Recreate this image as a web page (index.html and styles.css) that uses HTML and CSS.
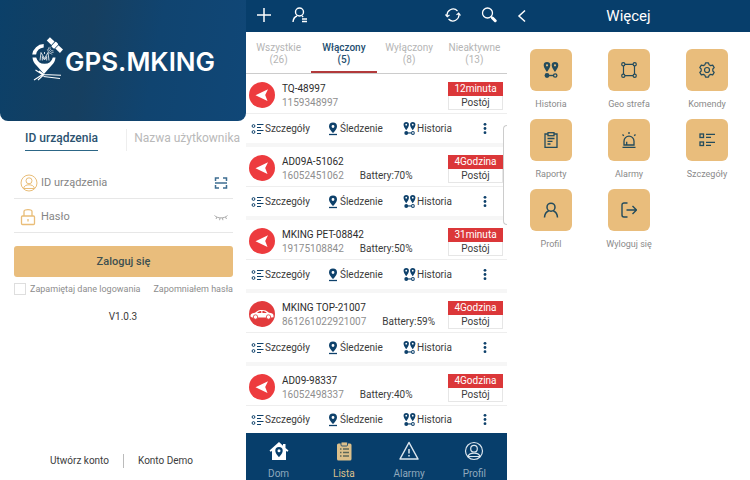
FILE: index.html
```html
<!DOCTYPE html>
<html lang="pl">
<head>
<meta charset="utf-8">
<meta name="viewport" content="width=device-width, initial-scale=1">
<title>GPS.MKING</title>
<link rel="stylesheet" href="styles.css">
</head>
<body>
<svg class="sprite" aria-hidden="true">
  <symbol id="i-arrow" viewBox="0 0 26 26"><circle cx="13" cy="13" r="13" fill="#ed3b3e"/><path d="M6.500 13.300 19 7.300 16.200 13l2.300 6z" fill="#fff"/></symbol>
  <symbol id="i-car" viewBox="0 0 26 26"><circle cx="13" cy="13" r="13" fill="#e23a3c"/><path d="M1.500 15.500c0-2.500 1-3 4.500-3.700C8.500 9.500 10 9 13 9s4.500.6 7 2.800c2.500.2 4.500.7 4.500 2.700v1.800l-2 .3H3z" fill="#fff"/><path d="M8 12c1.500-1.500 2.500-1.900 4.300-1.900V12zM13.400 10.100c1.900 0 3 .5 4.400 1.900h-4.400z" fill="#e23a3c"/><circle cx="6.500" cy="16" r="2.200" fill="#fff" stroke="#e23a3c" stroke-width=".8"/><circle cx="19.500" cy="16" r="2.200" fill="#fff" stroke="#e23a3c" stroke-width=".8"/></symbol>
  <symbol id="i-list" viewBox="0 0 14 12" fill="none" stroke="currentColor"><circle cx="2.500" cy="3" r="1.400"/><circle cx="2.500" cy="9" r="1.400"/><path d="M6 1.500h6.500M6 4.500h4M6 7.500h6.500M6 10.500h4"/></symbol>
  <symbol id="i-pin" viewBox="0 0 12 14"><path fill="currentColor" fill-rule="evenodd" d="M6 .5a4 4 0 0 0-4 4C2 7.300 6 11 6 11s4-3.700 4-6.500a4 4 0 0 0-4-4zm0 2.600a1.400 1.400 0 1 1 0 2.800 1.400 1.400 0 0 1 0-2.800z"/><path d="M2 12.500h8" stroke="currentColor" stroke-width="1.300"/></symbol>
  <symbol id="i-route" viewBox="0 0 16 16"><path fill="currentColor" fill-rule="evenodd" d="M4 0A3.300 3.300 0 0 0 .7 3.300C.7 6 4 10 4 10s3.300-4 3.300-6.700A3.300 3.300 0 0 0 4 0zm0 2.200a1.100 1.100 0 1 1 0 2.200 1.100 1.100 0 0 1 0-2.200zM12 0a3.300 3.300 0 0 0-3.300 3.300C8.700 6 12 10 12 10s3.300-4 3.300-6.700A3.300 3.300 0 0 0 12 0zm0 2.200a1.100 1.100 0 1 1 0 2.200 1.100 1.100 0 0 1 0-2.200z"/><path d="M4 13.500h6.500" stroke="currentColor" stroke-width="1.400"/><circle cx="4" cy="13.500" r="2.400" fill="currentColor"/><circle cx="12.200" cy="13.500" r="1.700" fill="none" stroke="currentColor" stroke-width="1.300"/></symbol>
  <symbol id="i-dots" viewBox="0 0 4 14" fill="currentColor"><circle cx="2" cy="2.500" r="1.500"/><circle cx="2" cy="7" r="1.500"/><circle cx="2" cy="11.500" r="1.500"/></symbol>
</svg>

<main class="screens">
  <section class="login">
    <header class="hero">
      <svg class="logo" viewBox="0 0 32 44" aria-hidden="true">
        <path d="M13 37 5.500 28.500A12 12 0 0 1 1.500 20.500h3.700a8.600 8.600 0 0 0 16.600 0h2.700a12 12 0 0 1-4 8z" fill="#fff"/>
        <path d="M1.200 17.500A12 12 0 0 1 12.700 7v3.600a8.600 8.600 0 0 0-7.600 6.900z" fill="#fff"/>
        <path d="M9 23.500 10 15.500l3.500 6 3.500-6 1 8M11.300 23.500v-4l2.200 3.500 2.200-3.500v4M13.500 15v2" fill="none" stroke="#fff" stroke-width=".8"/>
        <g transform="rotate(43 24 8)" fill="#fff"><rect x="15" y="5.800" width="6.300" height="4.600"/><rect x="22" y="5" width="4" height="6.500" rx="1"/><rect x="26.700" y="5.800" width="6.300" height="4.600"/></g>
        <path d="M17.500 10.500a4.500 4.500 0 0 0 5 5M16.300 12.300a6 6 0 0 0 5 5M19 9.800c-.5 2.500 1 4 3.500 4.200" fill="none" stroke="#fff" stroke-width=".6"/>
        <path d="m4.500 33 7 4.500L3 43M8 34l5 3.500L7 43m5-5.500 18 .8M12.500 39.500l16.500 2" fill="none" stroke="#fff" stroke-width="1.100"/>
      </svg>
      <h1 class="brand">GPS.MKING</h1>
    </header>
    <nav class="login-tabs">
      <a class="login-tab active" href="#id">ID urządzenia</a>
      <a class="login-tab" href="#name">Nazwa użytkownika</a>
    </nav>
    <form class="login-form">
      <label class="field">
        <svg class="field-icon" viewBox="0 0 18 18" fill="none" stroke="#e9bd78" aria-hidden="true"><circle cx="9" cy="9" r="8"/><circle cx="9" cy="6.800" r="3"/><path d="M3.500 14.500c.5-5 10.500-5 11 0z"/></svg>
        <input type="text" placeholder="ID urządzenia" aria-label="ID urządzenia">
        <svg class="field-action" viewBox="0 0 14 12" fill="none" stroke="#3e6d91" stroke-width="1.500" aria-hidden="true"><path d="M1.500 4V1h3.500M9 1h3.500v3M1.500 8v3h3.500M9 11h3.500V8M1 6h12"/></svg>
      </label>
      <label class="field">
        <svg class="field-icon" viewBox="0 0 18 18" fill="none" stroke="#e9bd78" stroke-width="1.300" aria-hidden="true"><rect x="1.500" y="8" width="13" height="8.500" rx="1"/><path d="M4 8V3.500C4 1 12 1 12 3.500V8M8 11v2.500"/></svg>
        <input type="password" placeholder="Hasło" aria-label="Hasło">
        <svg class="field-action" viewBox="0 0 14 12" fill="none" stroke="#aaa" aria-hidden="true"><path d="M.5 4.500c3 3.200 10 3.200 13 0M3 6 2 8m4-1-.4 2.200M8.500 7l.4 2.200M11.500 6l1 2"/></svg>
      </label>
      <button class="submit" type="submit">Zaloguj się</button>
      <div class="options">
        <label class="remember"><input type="checkbox">Zapamiętaj dane logowania</label>
        <a href="#forgot">Zapomniałem hasła</a>
      </div>
    </form>
    <p class="version">V1.0.3</p>
    <footer class="login-footer">
      <a href="#register">Utwórz konto</a>
      <a href="#demo">Konto Demo</a>
    </footer>
  </section>

  <section class="devices">
    <header class="bar">
      <button class="icon-button" aria-label="Dodaj"><svg class="icon-16" viewBox="0 0 16 16" fill="none" stroke="#fff" stroke-width="1.500"><path d="M8 1v14M1 8h14"/></svg></button>
      <button class="icon-button" aria-label="Konta"><svg class="icon-16" viewBox="0 0 16 16" fill="none" stroke="#fff" stroke-width="1.400"><circle cx="7.500" cy="5" r="4"/><path d="M1 15c.3-3.500 2-5.300 4-6M10 9l1.200 1M10 12h5M10 14.500h5"/></svg></button>
      <span class="spacer"></span>
      <button class="icon-button" aria-label="Odśwież"><svg class="icon-16" viewBox="0 0 16 16" fill="none" stroke="#fff" stroke-width="1.200"><path d="M2.300 9.500A6 6 0 0 1 12.500 4M13.700 6.500A6 6 0 0 1 3.500 12M.5 7.500l1.800 2.200 2.200-1.600M11.500 7.900l2.200-1.700 1.800 2.300"/></svg></button>
      <button class="icon-button" aria-label="Szukaj"><svg class="icon-16" viewBox="0 0 16 16" fill="none" stroke="#fff"><circle cx="6.500" cy="6" r="5" stroke-width="1.300"/><path d="m10 9.500 1.500 1.500" stroke-width="1.300"/><path d="m11.500 11 2.700 2.700" stroke-width="3" stroke-linecap="round"/></svg></button>
    </header>
    <nav class="filters">
      <a href="#all">Wszystkie<br>(26)</a>
      <a class="active" href="#on">Włączony<br>(5)</a>
      <a href="#off">Wyłączony<br>(8)</a>
      <a href="#inactive">Nieaktywne<br>(13)</a>
    </nav>
    <div class="device-list">
      <article class="device">
        <div class="device-head">
          <svg class="avatar" aria-hidden="true"><use href="#i-arrow"/></svg>
          <div class="device-info"><h2>TQ-48997</h2><p><span class="imei">1159348997</span></p></div>
          <div class="status"><strong>12minuta</strong><span>Postój</span></div>
        </div>
        <div class="actions">
          <a href="#d"><svg class="list-icon"><use href="#i-list"/></svg>Szczegóły</a>
          <a href="#t"><svg class="pin-icon"><use href="#i-pin"/></svg>Śledzenie</a>
          <a href="#h"><svg class="route-icon"><use href="#i-route"/></svg>Historia</a>
          <button class="more-button" aria-label="Więcej opcji"><svg><use href="#i-dots"/></svg></button>
        </div>
      </article>
      <article class="device">
        <div class="device-head">
          <svg class="avatar" aria-hidden="true"><use href="#i-arrow"/></svg>
          <div class="device-info"><h2>AD09A-51062</h2><p><span class="imei">16052451062</span><span>Battery:70%</span></p></div>
          <div class="status"><strong>4Godzina</strong><span>Postój</span></div>
        </div>
        <div class="actions">
          <a href="#d"><svg class="list-icon"><use href="#i-list"/></svg>Szczegóły</a>
          <a href="#t"><svg class="pin-icon"><use href="#i-pin"/></svg>Śledzenie</a>
          <a href="#h"><svg class="route-icon"><use href="#i-route"/></svg>Historia</a>
          <button class="more-button" aria-label="Więcej opcji"><svg><use href="#i-dots"/></svg></button>
        </div>
      </article>
      <article class="device">
        <div class="device-head">
          <svg class="avatar" aria-hidden="true"><use href="#i-arrow"/></svg>
          <div class="device-info"><h2>MKING PET-08842</h2><p><span class="imei">19175108842</span><span>Battery:50%</span></p></div>
          <div class="status"><strong>31minuta</strong><span>Postój</span></div>
        </div>
        <div class="actions">
          <a href="#d"><svg class="list-icon"><use href="#i-list"/></svg>Szczegóły</a>
          <a href="#t"><svg class="pin-icon"><use href="#i-pin"/></svg>Śledzenie</a>
          <a href="#h"><svg class="route-icon"><use href="#i-route"/></svg>Historia</a>
          <button class="more-button" aria-label="Więcej opcji"><svg><use href="#i-dots"/></svg></button>
        </div>
      </article>
      <article class="device">
        <div class="device-head">
          <svg class="avatar" aria-hidden="true"><use href="#i-car"/></svg>
          <div class="device-info"><h2>MKING TOP-21007</h2><p><span class="imei">861261022921007</span><span>Battery:59%</span></p></div>
          <div class="status"><strong>4Godzina</strong><span>Postój</span></div>
        </div>
        <div class="actions">
          <a href="#d"><svg class="list-icon"><use href="#i-list"/></svg>Szczegóły</a>
          <a href="#t"><svg class="pin-icon"><use href="#i-pin"/></svg>Śledzenie</a>
          <a href="#h"><svg class="route-icon"><use href="#i-route"/></svg>Historia</a>
          <button class="more-button" aria-label="Więcej opcji"><svg><use href="#i-dots"/></svg></button>
        </div>
      </article>
      <article class="device">
        <div class="device-head">
          <svg class="avatar" aria-hidden="true"><use href="#i-arrow"/></svg>
          <div class="device-info"><h2>AD09-98337</h2><p><span class="imei">16052498337</span><span>Battery:40%</span></p></div>
          <div class="status"><strong>4Godzina</strong><span>Postój</span></div>
        </div>
        <div class="actions">
          <a href="#d"><svg class="list-icon"><use href="#i-list"/></svg>Szczegóły</a>
          <a href="#t"><svg class="pin-icon"><use href="#i-pin"/></svg>Śledzenie</a>
          <a href="#h"><svg class="route-icon"><use href="#i-route"/></svg>Historia</a>
          <button class="more-button" aria-label="Więcej opcji"><svg><use href="#i-dots"/></svg></button>
        </div>
      </article>
    </div>
    <nav class="bottom-nav">
      <a href="#home"><svg viewBox="0 0 20 20"><path fill="#fff" fill-rule="evenodd" d="M10 1 .5 9.500l1 1.200L3 10v9h14v-9l1.500.7 1-1.200L16.500 7V3H14v1.700zM10 6a3.700 3.700 0 0 0-3.700 3.700C6.300 12.500 10 16 10 16s3.700-3.500 3.700-6.300A3.700 3.700 0 0 0 10 6zm0 2.200a1.500 1.500 0 1 1 0 3 1.500 1.500 0 0 1 0-3z"/></svg>Dom</a>
      <a class="active" href="#list"><svg viewBox="0 0 20 20"><rect x="3" y="2.500" width="14.500" height="17" rx="1.500" fill="#dcc08b"/><rect x="7" y="1" width="6.500" height="4" rx="1" fill="#dcc08b" stroke="#073e6b" stroke-width=".8"/><path d="M6 8h1.500M9 8h6M6 11.500h1.500M9 11.500h6M6 15h1.500M9 15h6" stroke="#5d6758" stroke-width="1.300"/></svg>Lista</a>
      <a href="#alarms"><svg viewBox="0 0 20 20" fill="none" stroke="#dce6ee" stroke-width="1.500" stroke-linejoin="round"><path d="M10 1.500 19 18H1zM10 8v4.500M10 14v1.500"/></svg>Alarmy</a>
      <a href="#profile"><svg viewBox="0 0 20 20" fill="none" stroke="#dce6ee" stroke-width="1.200"><circle cx="10" cy="10" r="8.500"/><circle cx="10" cy="7.700" r="3.300"/><path d="M4 15.500c1-4.500 11-4.500 12 0z"/></svg>Profil</a>
    </nav>
    <span class="edge-handle"></span>
  </section>

  <section class="more">
    <header class="bar more-bar">
      <button class="icon-button" aria-label="Wstecz"><svg class="icon-16" viewBox="0 0 16 16" fill="none" stroke="#fff" stroke-width="1.500"><path d="M10 2.500 4 8l6 5.500"/></svg></button>
      <h2>Więcej</h2>
      <span></span>
    </header>
    <nav class="tiles">
      <a href="#h"><span class="tile"><svg><use href="#i-route"/></svg></span>Historia</a>
      <a href="#g"><span class="tile"><svg viewBox="0 0 16 16" fill="none" stroke="currentColor" stroke-width="1.200"><path d="M4 2.300h8M4 13.700h8M2.500 4v8M13.500 4v8"/><circle cx="2.300" cy="2.300" r="1.600"/><circle cx="13.700" cy="2.300" r="1.600"/><circle cx="2.300" cy="13.700" r="1.600"/><circle cx="13.700" cy="13.700" r="1.600"/></svg></span>Geo strefa</a>
      <a href="#k"><span class="tile"><svg viewBox="0 0 16 16" fill="none" stroke="currentColor" stroke-width="1.200" stroke-linejoin="round"><path d="M6.500.8h3l.6 2 1.500.8 2.100-.5 1.500 2.500L13.800 7v2l1.400 1.400-1.500 2.500-2.100-.5-1.500.8-.6 2h-3l-.6-2-1.500-.8-2.100.5-1.500-2.500L2.200 9V7L.8 5.600l1.500-2.500 2.100.5 1.500-.8z"/><circle cx="8" cy="8" r="2.500"/></svg></span>Komendy</a>
      <a href="#r"><span class="tile"><svg viewBox="0 0 16 16" fill="none" stroke="currentColor" stroke-width="1.300"><path d="M5 2H2v13.300h12V2h-3"/><rect x="5" y=".7" width="6" height="3"/><path d="M4.500 6.500h7M4.500 9.300h5M4.500 12h3"/></svg></span>Raporty</a>
      <a href="#a"><span class="tile"><svg viewBox="0 0 16 16" fill="none" stroke="currentColor" stroke-width="1.300"><path d="M3 13V9.200a5 5 0 0 1 10 0V13zM1.500 15.300h13M5.700 12.500V9.800M8 0v2M1.500 2.500l1.300 1.300M14.500 2.500l-1.300 1.300"/></svg></span>Alarmy</a>
      <a href="#s"><span class="tile"><svg viewBox="0 0 16 16" fill="none" stroke="currentColor" stroke-width="1.300"><rect x="1" y="2" width="3.500" height="3.500"/><rect x="1" y="10" width="3.500" height="3.500"/><path d="M7 2.300h9M7 5.300h5M7 10.300h9M7 13.300h5"/></svg></span>Szczegóły</a>
      <a href="#p"><span class="tile"><svg viewBox="0 0 16 16" fill="none" stroke="currentColor" stroke-width="1.500"><circle cx="8" cy="5.200" r="4"/><path d="M1.500 15.500c.2-3.800 1.800-5.700 4.200-6.800M14.500 15.500c-.2-3.800-1.800-5.700-4.200-6.800"/></svg></span>Profil</a>
      <a href="#w"><span class="tile"><svg viewBox="0 0 16 16" fill="none" stroke="currentColor" stroke-width="1.400"><path d="M6.500 1H3a2 2 0 0 0-2 2v10a2 2 0 0 0 2 2h3.500M5.500 8h10M11.500 4l4 4-4 4"/></svg></span>Wyloguj się</a>
    </nav>
  </section>
</main>
</body>
</html>
```
FILE: styles.css
```css
* { box-sizing: border-box; }
body {
  margin: 0;
  font-family: Roboto, "Liberation Sans", sans-serif;
  font-size: 10px;
  color: #3c3c3c;
  background: #fff;
}
h1, h2, p { margin: 0; font-weight: 400; }
a { color: inherit; text-decoration: none; }
button, input { font: inherit; color: inherit; border: 0; padding: 0; background: none; }
svg { display: block; flex: none; }
.sprite { position: absolute; width: 0; height: 0; }

.screens {
  display: grid;
  grid-template-columns: 246fr 261fr 243fr;
  min-height: 100vh;
}
.screens > section { min-width: 0; }

/* Login */
.login { display: flex; flex-direction: column; }
.hero {
  display: flex;
  align-items: center;
  justify-content: center;
  gap: 2px;
  padding: 37px 0 40px;
  border-radius: 0 0 8px 8px;
  background: linear-gradient(100deg, #0b4069 0%, #163f60 36%, #104470 62%, #104777 100%);
}
.logo { width: 32px; height: 44px; }
.brand { padding-top: 6px; font: 600 26px/32px Inter, sans-serif; color: #fff; }
.login-tabs { display: flex; justify-content: space-between; padding: 8px 6px 0 25px; font-size: 12px; line-height: 18px; }
.login-tab { color: #b9b9b9; }
.login-tab + .login-tab { padding-left: 7px; border-left: 1px solid #eee; }
.login-tab.active { padding-bottom: 3px; border-bottom: 1px solid #2c6686; color: #2c5370; font-weight: 500; }
.login-form { padding: 14px 13px 0 14px; }
.field {
  display: flex;
  align-items: center;
  gap: 3px;
  height: 34px;
  padding: 2px 5px 0 6px;
  border-bottom: 1px solid #e7e7e7;
}
.field-icon { width: 18px; height: 18px; }
.field-action { width: 14px; height: 12px; }
.field input { flex: 1; min-width: 0; outline: 0; font-size: 11px; }
.field input::placeholder { color: #858585; opacity: 1; }
.submit {
  width: 100%;
  height: 31px;
  margin-top: 13px;
  border-radius: 3px;
  background: #e9bd7c;
  color: #3d5050;
  font-size: 11px;
  font-weight: 500;
}
.options { display: flex; justify-content: space-between; align-items: center; margin-top: 6px; font-size: 9px; color: #8d8d8d; }
.remember { display: flex; align-items: center; gap: 4px; }
.remember input { appearance: none; width: 12px; height: 12px; margin: 0; border: 1px solid #dedede; }
.version { margin-top: 16px; line-height: 12px; text-align: center; }
.login-footer { display: grid; grid-template-columns: 1fr 1fr; margin-top: auto; padding-bottom: 12px; line-height: 14px; }
.login-footer a { padding: 0 14px; text-align: right; }
.login-footer a + a { border-left: 1px solid #bbb; text-align: left; }

/* Shared top bar */
.bar { display: flex; align-items: center; height: 32px; padding: 0 10px; background: #073e6b; color: #fff; }
.icon-button { display: block; }
.icon-16 { width: 16px; height: 16px; }

/* Device list */
.devices { position: relative; display: flex; flex-direction: column; }
.devices .bar { gap: 20px; padding-bottom: 3px; }
.spacer { flex: 1; }
.filters { display: grid; grid-template-columns: repeat(4, 1fr); height: 42px; border-bottom: 1px solid #ccc; text-align: center; line-height: 12px; color: #b5b5b5; }
.filters a { padding-top: 10px; }
.filters .active { color: #234e70; font-weight: 500; border-bottom: 2px solid #b23a3b; }
.device-list { flex: 1; }
.device { border-bottom: 4px solid #f6f6f6; }
.device-head { display: flex; align-items: flex-start; gap: 7px; height: 40px; padding: 8px 4px 0 3px; border-bottom: 1px solid #eee; }
.avatar { width: 26px; height: 26px; }
.device-info { flex: 1; min-width: 0; line-height: 14px; }
.device-info h2 { font-size: 10px; line-height: 14px; color: #2d2d2d; }
.device-info p { display: flex; gap: 16px; white-space: nowrap; }
.imei { color: #8f8f8f; }
.status { width: 55px; text-align: center; line-height: 14px; }
.status strong, .status span { display: block; }
.status strong { font-weight: 400; color: #fff; background: #db3739; }
.status span { line-height: 13px; border: 1px solid #e6e6e6; border-top: 0; }
.actions { display: grid; grid-template-columns: 76px 76px 1fr auto; align-items: center; height: 29px; padding: 0 20px 0 5px; }
.device:last-child { border-bottom: 0; }
.device:last-child .actions { height: 27px; }
.actions a { display: flex; align-items: center; }
.actions svg { color: #0e416b; }
.list-icon { width: 14px; height: 12px; }
.pin-icon { width: 12px; height: 14px; margin-right: 1px; }
.route-icon { width: 13px; height: 13px; margin-right: 1px; }
.more-button svg { width: 4px; height: 13px; }
.bottom-nav { display: grid; grid-template-columns: repeat(4, 1fr); height: 47px; background: #073e6b; color: #8fa9be; line-height: 12px; }
.bottom-nav a { display: flex; flex-direction: column; align-items: center; gap: 7px; padding-top: 8px; }
.bottom-nav svg { width: 20px; height: 20px; }
.bottom-nav .active { color: #dcc08b; }
.edge-handle { position: absolute; right: 0; top: 125px; width: 4px; height: 100px; border: 1px solid #ccc; border-right: 0; border-radius: 4px 0 0 4px; background: #fff; }

/* More menu */
.more-bar { display: grid; grid-template-columns: 16px 1fr 16px; padding: 0 8px; }
.more-bar h2 { font-size: 15px; text-align: center; }
.tiles { display: grid; grid-template-columns: repeat(3, 1fr); row-gap: 9px; padding: 17px 4px 0 5px; font-size: 9px; line-height: 12px; color: #8a8a8a; text-align: center; }
.tiles a { display: flex; flex-direction: column; align-items: center; gap: 7px; }
.tile { display: grid; place-items: center; width: 42px; height: 42px; border-radius: 6px; background: #e9bd7c; color: #234b5c; }
.tile svg { width: 16px; height: 16px; }
```
